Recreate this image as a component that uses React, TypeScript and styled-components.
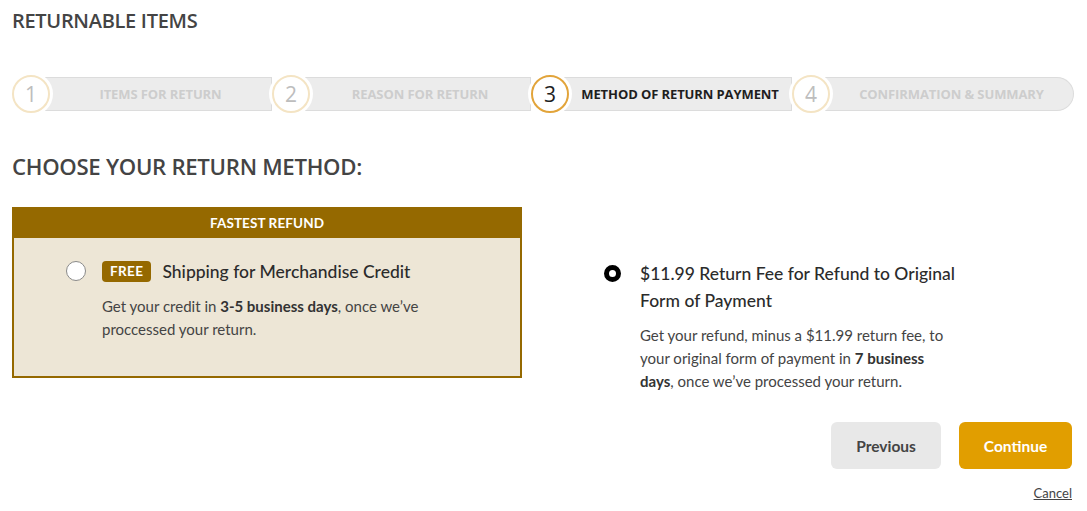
import React from "react";
import styled, { createGlobalStyle, css } from "styled-components";

const Global = createGlobalStyle`
  * { box-sizing: border-box; }
  html, body { margin: 0; padding: 0; background: #fff; }
  body { font-family: Lato, "Open Sans", Arial, sans-serif; color: #333; }
`;

const GOLD = "#956900";

const Page = styled.div`
  width: 1087px;
  height: 511px;
  padding: 9px 13px 0 12px;
  overflow: hidden;
`;

const Title = styled.h1`
  margin: 0;
  font-family: "Open Sans", sans-serif;
  font-size: 20px;
  font-weight: 600;
  color: #444;
  letter-spacing: -0.3px;
  line-height: 24px;
`;

const Stepper = styled.div`
  display: grid;
  grid-template-columns: 260px 259px 261px 1fr;
  margin-top: 42px;
  height: 38px;
`;

const Step = styled.div`
  position: relative;
  display: flex;
  align-items: center;
  height: 38px;
`;

const Bar = styled.div<{ $last?: boolean }>`
  flex: 1;
  height: 34px;
  margin-left: -20px;
  background: #ececec;
  border: 1px solid #dcdcdc;
  border-left: none;
  display: flex;
  align-items: center;
  justify-content: center;
  padding-left: 20px;
  ${(p) =>
    p.$last &&
    css`
      border-radius: 0 17px 17px 0;
    `}
`;

const StepLabel = styled.span<{ $active?: boolean }>`
  font-family: "Open Sans", sans-serif;
  font-size: 13px;
  font-weight: 700;
  letter-spacing: -0.1px;
  color: ${(p) => (p.$active ? "#1e1e1e" : "#cdcdcd")};
  white-space: nowrap;
`;

const Circle = styled.div<{ $active?: boolean }>`
  position: relative;
  z-index: 1;
  width: 38px;
  height: 38px;
  flex: 0 0 38px;
  border-radius: 50%;
  background: #fff;
  box-shadow: 0 0 0 3px #fff;
  border: 2px solid ${(p) => (p.$active ? "#e2a43a" : "#f4e4c4")};
  display: flex;
  align-items: center;
  justify-content: center;
  font-family: "Open Sans", sans-serif;
  font-size: 21px;
  color: ${(p) => (p.$active ? "#1e1e1e" : "#bdbdbd")};
`;

const Heading = styled.h2`
  margin: 40px 0 0;
  font-family: "Open Sans", sans-serif;
  font-size: 22.2px;
  font-weight: 600;
  color: #444;
  letter-spacing: -0.3px;
  line-height: 28px;
`;

const Options = styled.div`
  display: grid;
  grid-template-columns: 510px 1fr;
  column-gap: 82px;
  margin-top: 26px;
`;

const Card = styled.div`
  display: flex;
  flex-direction: column;
`;

const CardHeader = styled.div`
  height: 31px;
  background: ${GOLD};
  color: #fff;
  font-size: 13.5px;
  font-weight: 700;
  display: flex;
  align-items: center;
  justify-content: center;
  letter-spacing: 0.1px;
`;

const CardBody = styled.div`
  height: 140px;
  background: #ede6d6;
  border: 2px solid ${GOLD};
  border-top: none;
  padding: 20px 0 0 52px;
`;

const Option = styled.div`
  display: flex;
  align-items: flex-start;
  gap: 16px;
`;

const Radio = styled.span<{ $checked?: boolean }>`
  flex: 0 0 auto;
  width: ${(p) => (p.$checked ? 17 : 20)}px;
  height: ${(p) => (p.$checked ? 17 : 20)}px;
  border-radius: 50%;
  margin-top: ${(p) => (p.$checked ? 5 : 3)}px;
  ${(p) =>
    p.$checked
      ? css`
          background: #fff;
          border: 5px solid #000;
          margin-right: 3px;
        `
      : css`
          background: #fff;
          border: 1px solid #8a8a8a;
        `}
`;

const OptionText = styled.div<{ $width?: number }>`
  display: flex;
  flex-direction: column;
  max-width: ${(p) => p.$width ?? 400}px;
`;

const OptionTitle = styled.div`
  display: flex;
  align-items: center;
  gap: 11px;
  font-size: 17.5px;
  font-weight: 500;
  color: #2b2b2b;
  line-height: 27px;
`;

const Badge = styled.span`
  background: ${GOLD};
  color: #fff;
  font-size: 13.5px;
  font-weight: 700;
  letter-spacing: 0.4px;
  border-radius: 4px;
  padding: 0 8px;
  height: 21px;
  line-height: 21px;
`;

const Desc = styled.p`
  margin: 10px 0 0;
  font-size: 15px;
  line-height: 23px;
  color: #444;
  b {
    font-weight: 700;
    color: #333;
  }
`;

const RightCol = styled.div`
  padding-top: 53px;
`;

const Actions = styled.div`
  display: flex;
  flex-direction: column;
  align-items: flex-end;
  margin-top: 29px;
  margin-right: 2px;
`;

const ButtonRow = styled.div`
  display: flex;
  gap: 18px;
`;

const Button = styled.button<{ $primary?: boolean }>`
  height: 47px;
  width: ${(p) => (p.$primary ? 113 : 110)}px;
  border: none;
  border-radius: 6px;
  font-family: Lato, sans-serif;
  font-size: 15.5px;
  font-weight: 700;
  cursor: pointer;
  background: ${(p) => (p.$primary ? "#e19e00" : "#e8e8e8")};
  color: ${(p) => (p.$primary ? "#fff" : "#444")};
`;

const Cancel = styled.a`
  margin-top: 16px;
  font-size: 13px;
  line-height: 16px;
  color: #444;
  text-decoration: underline;
  cursor: pointer;
`;

const steps = [
  "ITEMS FOR RETURN",
  "REASON FOR RETURN",
  "METHOD OF RETURN PAYMENT",
  "CONFIRMATION & SUMMARY",
];

export default function App() {
  return (
    <>
      <Global />
      <Page>
        <Title>RETURNABLE ITEMS</Title>
        <Stepper>
          {steps.map((s, i) => {
            const active = i === 2;
            const last = i === steps.length - 1;
            return (
              <Step key={s}>
                <Circle $active={active}>{i + 1}</Circle>
                <Bar $last={last}>
                  <StepLabel $active={active}>{s}</StepLabel>
                </Bar>
              </Step>
            );
          })}
        </Stepper>
        <Heading>CHOOSE YOUR RETURN METHOD:</Heading>
        <Options>
          <Card>
            <CardHeader>FASTEST REFUND</CardHeader>
            <CardBody>
              <Option>
                <Radio />
                <OptionText>
                  <OptionTitle>
                    <Badge>FREE</Badge>
                    Shipping for Merchandise Credit
                  </OptionTitle>
                  <Desc>
                    Get your credit in <b>3-5 business days</b>, once we’ve
                    <br />
                    proccessed your return.
                  </Desc>
                </OptionText>
              </Option>
            </CardBody>
          </Card>
          <RightCol>
            <Option>
              <Radio $checked />
              <OptionText $width={320}>
                <OptionTitle>
                  $11.99 Return Fee for Refund to Original Form of Payment
                </OptionTitle>
                <Desc>
                  Get your refund, minus a $11.99 return fee, to your original
                  form of payment in <b>7 business days</b>, once we’ve
                  processed your return.
                </Desc>
              </OptionText>
            </Option>
          </RightCol>
        </Options>
        <Actions>
          <ButtonRow>
            <Button>Previous</Button>
            <Button $primary>Continue</Button>
          </ButtonRow>
          <Cancel>Cancel</Cancel>
        </Actions>
      </Page>
    </>
  );
}
